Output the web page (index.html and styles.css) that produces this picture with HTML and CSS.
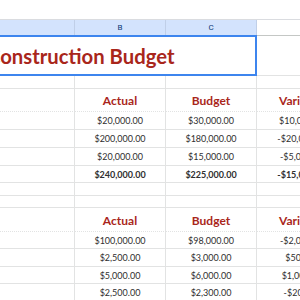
FILE: index.html
```html
<!DOCTYPE html>
<html>
<head>
<meta charset="utf-8">
<link rel="stylesheet" href="styles.css">
</head>
<body>
<div class="topbar"></div>
<div class="sheet">
  <div class="colhead sel">&nbsp;</div>
  <div class="colhead sel">B</div>
  <div class="colhead sel">C</div>
  <div class="colhead"></div>

  <div class="title"><span class="title-text">Construction Budget</span></div>
  <div class="cell r-title"></div>

  <div class="cell r-blank13"></div><div class="cell r-blank13"></div><div class="cell r-blank13"></div><div class="cell r-blank13"></div>

  <div class="cell hd r-hd1"></div><div class="cell hd r-hd1">Actual</div><div class="cell hd r-hd1">Budget</div><div class="cell hd r-hd1">Variance</div>

  <div class="cell r18"></div><div class="cell num r18">$20,000.00</div><div class="cell num r18">$30,000.00</div><div class="cell num r18">$10,000.00</div>
  <div class="cell r18"></div><div class="cell num r18">$200,000.00</div><div class="cell num r18">$180,000.00</div><div class="cell num r18">-$20,000.00</div>
  <div class="cell r18"></div><div class="cell num r18">$20,000.00</div><div class="cell num r18">$15,000.00</div><div class="cell num r18">-$5,000.00</div>
  <div class="cell r17"></div><div class="cell num bold r17">$240,000.00</div><div class="cell num bold r17">$225,000.00</div><div class="cell num bold r17">-$15,000.00</div>

  <div class="cell r13"></div><div class="cell r13"></div><div class="cell r13"></div><div class="cell r13"></div>
  <div class="cell r12"></div><div class="cell r12"></div><div class="cell r12"></div><div class="cell r12"></div>

  <div class="cell hd r-hd2"></div><div class="cell hd r-hd2">Actual</div><div class="cell hd r-hd2">Budget</div><div class="cell hd r-hd2">Variance</div>

  <div class="cell r17"></div><div class="cell num r17">$100,000.00</div><div class="cell num r17">$98,000.00</div><div class="cell num r17">-$2,000.00</div>
  <div class="cell r18"></div><div class="cell num r18">$2,500.00</div><div class="cell num r18">$3,000.00</div><div class="cell num r18">$500.00</div>
  <div class="cell r17"></div><div class="cell num r17">$5,000.00</div><div class="cell num r17">$6,000.00</div><div class="cell num r17">$1,000.00</div>
  <div class="cell r18"></div><div class="cell num r18">$2,500.00</div><div class="cell num r18">$2,300.00</div><div class="cell num r18">-$200.00</div>
</div>
</body>
</html>
```

FILE: styles.css
```css
html, body {
  margin: 0;
  padding: 0;
  background: #ffffff;
  overflow: hidden;
  width: 300px;
  height: 300px;
}

.topbar {
  height: 19px;
  border-bottom: 1px solid #dadce0;
  background: #ffffff;
}

.sheet {
  display: grid;
  grid-template-columns: 75px 91px 91px 91px;
  width: 348px;
  font-family: Lato, "Liberation Sans", sans-serif;
  color: #333333;
}

.colhead {
  box-sizing: border-box;
  height: 16px;
  border-right: 1px solid #c7c9cc;
  border-bottom: 1px solid #c4c7c5;
  font-family: Roboto, "Liberation Sans", sans-serif;
  font-size: 8px;
  color: #444746;
  display: flex;
  align-items: center;
  justify-content: center;
}

.colhead.sel {
  background: #d3e3fd;
  color: #0b3a75;
  border-right-color: #c0cfe8;
}

.title {
  grid-column: 1 / 4;
  box-sizing: border-box;
  height: 41px;
  margin-top: -1px;
  border: 2px solid #3d85ee;
  border-left: none;
  overflow: hidden;
  display: flex;
  align-items: center;
  background: #ffffff;
}

.title-text {
  margin-left: -13px;
  white-space: nowrap;
  font-weight: 700;
  font-size: 20.3px;
  color: #a9261b;
}

.cell {
  box-sizing: border-box;
  border-right: 1px solid #e2e3e3;
  border-bottom: 1px solid #e2e3e3;
  display: flex;
  align-items: center;
  justify-content: center;
  white-space: nowrap;
  overflow: hidden;
}

.r-title { height: 40px; }
.r-blank13 { height: 13px; }
.r13 { height: 13px; }
.r12 { height: 12px; }
.r17 { height: 17px; }
.r18 { height: 18px; }
.r-hd1 { height: 23px; border-bottom-style: dotted; }
.r-hd2 { height: 24px; border-bottom-style: dotted; }

.hd {
  font-weight: 700;
  font-size: 12px;
  color: #a9261b;
  padding-top: 1px;
}

.num {
  font-size: 9px;
  color: #2f2f2f;
}

.bold {
  font-weight: 700;
}
```
